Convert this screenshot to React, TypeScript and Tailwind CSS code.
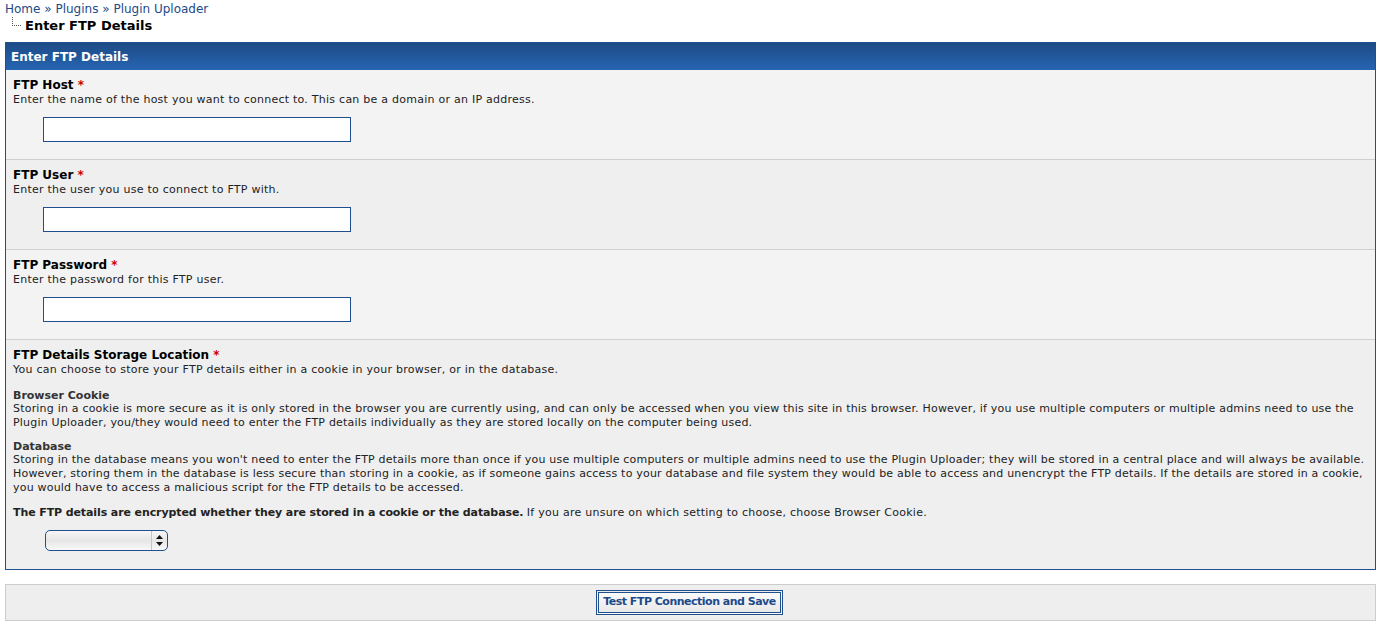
import React from 'react';

const font = { fontFamily: '"DejaVu Sans", Verdana, sans-serif' };

const Req = () => <span className="text-[#cc0000]">*</span>;

const TextRow: React.FC<{ title: string; desc: string; alt?: boolean; type?: string }> = ({ title, desc, alt, type }) => (
  <div className={`border-b border-[#d0d0d0] px-[7px] pt-[7px] pb-[17px] ${alt ? 'bg-[#efefef]' : 'bg-[#f3f3f3]'}`}>
    <div className="text-[12px] leading-[16px] font-bold text-black">
      {title} <Req />
    </div>
    <div className="text-[11px] leading-[14px] tracking-[0.25px] text-[#222]">{desc}</div>
    <div className="mt-[10px] pl-[30px]">
      <input
        type={type || 'text'}
        className="block w-[308px] h-[25px] border border-[#1f4f8c] bg-white outline-none"
      />
    </div>
  </div>
);

export default function App() {
  return (
    <div className="min-h-screen bg-white text-black" style={font}>
      <div className="pl-[5px] pt-[2px]">
        <div className="text-[12px] leading-[15px] text-[#1d4a8a]">
          <a href="#">Home</a> » <a href="#">Plugins</a> » <a href="#">Plugin Uploader</a>
        </div>
        <div className="flex items-start h-[17px]">
          <div className="ml-[7px] w-[9px] h-[9px] border-l border-b border-dotted border-[#555]" />
          <div className="ml-[4px] text-[13px] leading-[17px] font-bold">Enter FTP Details</div>
        </div>
      </div>

      <div className="ml-[5px] mr-[4px] mt-[8px] border border-[#1f4f8c]">
        <div className="h-[27px] bg-gradient-to-b from-[#1d4b86] to-[#2665b2] px-[5px] text-[12px] leading-[28px] font-bold text-white">
          Enter FTP Details
        </div>
        <TextRow title="FTP Host" desc="Enter the name of the host you want to connect to. This can be a domain or an IP address." />
        <TextRow title="FTP User" desc="Enter the user you use to connect to FTP with." alt />
        <TextRow title="FTP Password" desc="Enter the password for this FTP user." type="password" />
        <div className="bg-[#efefef] px-[7px] pt-[7px] pb-[18px]">
          <div className="text-[12px] leading-[16px] font-bold text-black">
            FTP Details Storage Location <Req />
          </div>
          <div className="text-[11px] leading-[14px] text-[#222]">
            <div className="tracking-[0.25px]">You can choose to store your FTP details either in a cookie in your browser, or in the database.</div>
            <div className="mt-[12px] font-bold text-[#333] leading-[13px]">Browser Cookie</div>
            <div className="whitespace-nowrap tracking-[0.2px]">
              Storing in a cookie is more secure as it is only stored in the browser you are currently using, and can only be accessed when you view this site in this browser. However, if you use multiple computers or multiple admins need to use the
              <br />
              Plugin Uploader, you/they would need to enter the FTP details individually as they are stored locally on the computer being used.
            </div>
            <div className="mt-[10px] font-bold text-[#333] leading-[13px]">Database</div>
            <div className="whitespace-nowrap tracking-[0.2px]">
              Storing in the database means you won't need to enter the FTP details more than once if you use multiple computers or multiple admins need to use the Plugin Uploader; they will be stored in a central place and will always be available.
              <br />
              However, storing them in the database is less secure than storing in a cookie, as if someone gains access to your database and file system they would be able to access and unencrypt the FTP details. If the details are stored in a cookie,
              <br />
              you would have to access a malicious script for the FTP details to be accessed.
            </div>
            <div className="mt-[11px]">
              <strong className="tracking-[-0.1px]">The FTP details are encrypted whether they are stored in a cookie or the database.</strong>{' '}
              <span className="tracking-[0.25px]">If you are unsure on which setting to choose, choose Browser Cookie.</span>
            </div>
          </div>
          <div className="mt-[10px] pl-[32px]">
            <div className="flex w-[123px] h-[21px] rounded-[5px] border border-[#1f4f8c] bg-gradient-to-b from-[#f6f6f6] via-[#e6e6e6] to-[#f8f8f8] overflow-hidden">
              <div className="flex-1" />
              <div className="w-[16px] border-l border-[#c4c4c4] flex items-center justify-center">
                <svg width="7" height="11" viewBox="0 0 7 11">
                  <path d="M3.5 0 L7 4 L0 4 Z" fill="#111" />
                  <path d="M0 7 L7 7 L3.5 11 Z" fill="#111" />
                </svg>
              </div>
            </div>
          </div>
        </div>
      </div>

      <div className="ml-[5px] mr-[4px] mt-[14px] h-[37px] border border-[#cccccc] bg-[#eeeeee] flex items-start justify-center pt-[5px]">
        <button className="h-[25px] px-[4px] border-[3px] border-double border-[#1f4f8c] bg-gradient-to-b from-[#fafafa] to-[#e9e9e9] text-[11px] font-bold tracking-[-0.5px] text-[#1d4a8a] -ml-[2px]">
          Test FTP Connection and Save
        </button>
      </div>
    </div>
  );
}
